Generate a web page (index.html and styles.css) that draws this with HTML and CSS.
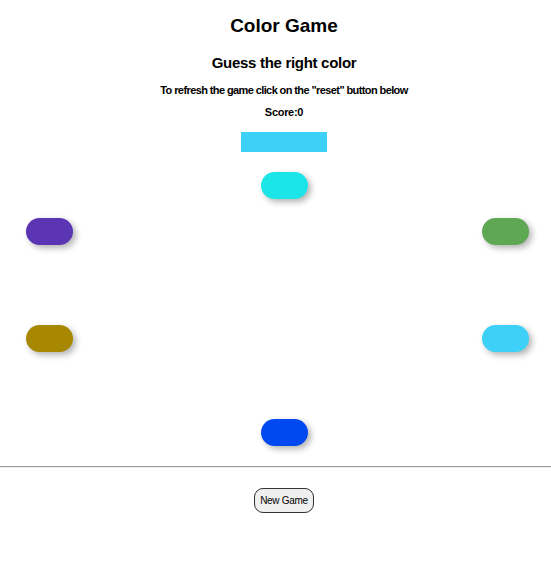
FILE: index.html
```html
<!DOCTYPE html>
<html>
<head>
<meta charset="utf-8">
<title>Color Game</title>
<link rel="stylesheet" href="styles.css">
</head>
<body>
<div class="page">
  <h1 class="title">Color Game</h1>
  <h2 class="subtitle">Guess the right color</h2>
  <p class="info">To refresh the game click on the "reset" button below</p>
  <p class="score">Score:0</p>
  <div class="target"></div>
  <div class="board">
    <div class="row row-center"><div class="pill c-cyan"></div></div>
    <div class="row row-sides row-2"><div class="pill c-purple"></div><div class="pill c-green"></div></div>
    <div class="row row-sides row-3"><div class="pill c-olive"></div><div class="pill c-sky"></div></div>
    <div class="row row-center row-4"><div class="pill c-blue"></div></div>
  </div>
</div>
<hr class="divider">
<div class="page footer">
  <button class="new-game">New Game</button>
</div>
</body>
</html>
```
FILE: styles.css
```css
html, body {
  margin: 0;
  padding: 0;
  background: #fff;
}
body {
  font-family: "Liberation Sans", Arial, sans-serif;
  color: #000;
}
.page {
  padding-left: 17px;
  display: flex;
  flex-direction: column;
  align-items: center;
}
.title {
  margin: 14px 0 0;
  font-size: 19px;
  line-height: 24px;
  font-weight: bold;
}
.subtitle {
  margin: 16px 0 0;
  font-size: 15px;
  line-height: 18px;
  font-weight: bold;
  letter-spacing: -0.3px;
}
.info {
  margin: 12px 0 0;
  font-size: 11px;
  line-height: 13px;
  font-weight: bold;
  letter-spacing: -0.6px;
}
.score {
  margin: 9px 0 0;
  font-size: 11px;
  line-height: 13px;
  font-weight: bold;
  letter-spacing: -0.3px;
}
.target {
  margin-top: 13px;
  width: 86px;
  height: 20px;
  background: #3ed1f8;
}
.board {
  align-self: stretch;
  margin-top: 20px;
  display: flex;
  flex-direction: column;
}
.row {
  display: flex;
}
.row-center {
  justify-content: center;
}
.row-sides {
  justify-content: space-between;
  padding-left: 9px;
  padding-right: 22px;
}
.row-2 { margin-top: 19px; }
.row-3 { margin-top: 80px; }
.row-4 { margin-top: 67px; }
.pill {
  width: 47px;
  height: 27px;
  border-radius: 14px;
  box-shadow: 3px 3px 6px rgba(0, 0, 0, 0.3);
}
.c-cyan { background: #1ce5e8; }
.c-purple { background: #5b35b3; }
.c-green { background: #5ea854; }
.c-olive { background: #a88800; }
.c-sky { background: #3ed1f8; }
.c-blue { background: #0048f0; }
.divider {
  margin: 20px 0 0;
  border: 0;
  border-top: 1px solid #9a9a9a;
  border-bottom: 1px solid #eee;
  height: 0;
}
.footer {
  padding-top: 20px;
}
.new-game {
  width: 60px;
  height: 25px;
  padding: 0;
  border: 1px solid #333;
  border-radius: 9px;
  background: #efefef;
  font-family: "Liberation Sans", Arial, sans-serif;
  font-size: 10px;
  letter-spacing: -0.3px;
  color: #000;
}
```
